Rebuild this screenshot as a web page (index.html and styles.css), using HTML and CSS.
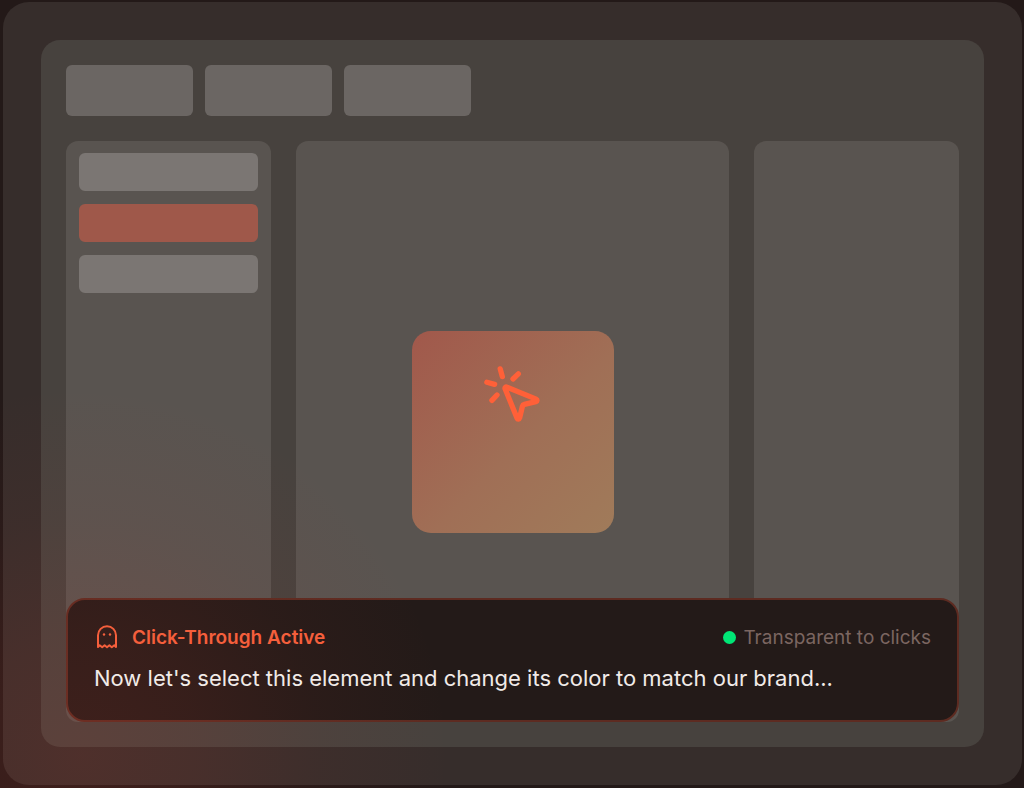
FILE: index.html
```
<!DOCTYPE html>
<html lang="en">

<head>
    <meta charset="UTF-8">
    <meta name="viewport" content="width=device-width, initial-scale=1.0">
    <title>Click-Through Mode</title>
    <link rel="stylesheet" href="styles.css">
</head>

<body>
    <main class="frame">
        <div class="window">
            <div class="toolbar">
                <div class="tool"></div>
                <div class="tool"></div>
                <div class="tool"></div>
            </div>
            <div class="workspace">
                <div class="panel sidebar">
                    <div class="layer"></div>
                    <div class="layer active"></div>
                    <div class="layer"></div>
                </div>
                <div class="panel canvas">
                    <div class="shape">
                        <svg class="pointer" viewBox="0 0 24 24" aria-hidden="true">
                            <path d="M14 4.1 12 6" />
                            <path d="m5.1 8-2.9-.8" />
                            <path d="m6 12-1.9 2" />
                            <path d="M7.2 2.2 8 5.1" />
                            <path d="M9.037 9.69a.498.498 0 0 1 .653-.653l11 4.5a.5.5 0 0 1-.074.949l-4.349 1.041a1 1 0 0 0-.74.739l-1.04 4.35a.5.5 0 0 1-.95.074z" />
                        </svg>
                    </div>
                </div>
                <div class="panel"></div>

                <section class="prompter">
                    <header class="prompterHeader">
                        <svg class="ghost" viewBox="0 0 26 26" aria-hidden="true">
                            <path d="M4 23V11.200a9 9 0 0 1 18 0V23L20.300 21.300L17.800 23.200L15.400 21.300L13 23.200L10.600 21.300L8.200 23.200L5.700 21.300Z" />
                            <circle cx="10" cy="10.500" r="1.200" />
                            <circle cx="16" cy="10.500" r="1.200" />
                        </svg>
                        <span class="mode">Click-Through Active</span>
                        <span class="status"><span class="dot"></span>Transparent to clicks</span>
                    </header>
                    <p class="script">Now let's select this element and change its color to match our brand...</p>
                </section>
            </div>
        </div>
    </main>
</body>

</html>
```
FILE: styles.css
```
* {
    box-sizing: border-box;
}

body {
    margin: 0;
    height: 100vh;
    padding: 2px 2px 3px 3px;
    background-color: #231918;
    font-family: Inter, "Liberation Sans", sans-serif;
}

/* Warm glow coming from the bottom left corner */
body::after {
    content: "";
    position: absolute;
    inset: 0;
    pointer-events: none;
    background: radial-gradient(circle at 80px 96%, rgba(190, 60, 45, 0.18) 0, rgba(190, 60, 45, 0.13) 120px, rgba(190, 60, 45, 0.05) 240px, transparent 370px);
}

.frame {
    height: 100%;
    padding: 38px;
    border-radius: 26px;
    background-color: #362d2b;
}

.window {
    display: flex;
    flex-direction: column;
    gap: 25px;
    height: 100%;
    padding: 25px;
    border-radius: 19px;
    background-color: #47423e;
}

.toolbar {
    display: flex;
    gap: 12px;
}

.tool {
    width: 127px;
    height: 51px;
    border-radius: 6px;
    background-color: #6b6663;
}

.workspace {
    position: relative;
    flex: 1;
    display: grid;
    grid-template-columns: 205px 1fr 205px;
    gap: 25px;
}

.panel {
    border-radius: 12px;
    background-color: #595450;
}

.sidebar {
    display: flex;
    flex-direction: column;
    gap: 13px;
    padding: 12px 13px;
}

.layer {
    height: 38px;
    border-radius: 6px;
    background-color: #7b7673;
}

.layer.active {
    background-color: #9f584a;
}

.canvas {
    display: flex;
    align-items: center;
    justify-content: center;
}

.shape {
    display: flex;
    justify-content: center;
    width: 202px;
    height: 202px;
    padding-top: 32px;
    border-radius: 19px;
    background: linear-gradient(135deg, #a1584b, #a06f56 55%, #a07b5a);
}

.pointer {
    width: 64px;
    height: 64px;
    fill: none;
    stroke: #ff6038;
    stroke-width: 2;
    stroke-linecap: round;
    stroke-linejoin: round;
}

/* The prompter floats over the bottom of the panels */
.prompter {
    position: absolute;
    left: 0;
    right: 0;
    bottom: 0;
    padding: 24px 26px 26px;
    border: 2px solid #5d2b21;
    border-radius: 19px;
    background-color: #231a18;
}

/* Text stays above the glow */
.prompterHeader,
.script {
    position: relative;
    z-index: 1;
}

.prompterHeader {
    display: flex;
    align-items: center;
    gap: 12px;
    height: 26px;
    font-size: 19px;
}

.ghost {
    width: 26px;
    height: 26px;
    fill: none;
    stroke: #f55f3c;
    stroke-width: 2;
    stroke-linejoin: round;
}

.ghost circle {
    fill: #f55f3c;
    stroke: none;
}

.mode {
    color: #f55f3c;
    font-weight: 600;
}

.status {
    display: flex;
    align-items: center;
    gap: 7px;
    margin-left: auto;
    color: #7b6661;
}

.dot {
    width: 13px;
    height: 13px;
    border-radius: 50%;
    background-color: #00e676;
}

.script {
    margin: 12px 0 0;
    color: #f1ebe8;
    font-size: 22px;
    line-height: 32px;
}
```
